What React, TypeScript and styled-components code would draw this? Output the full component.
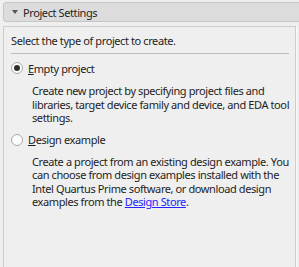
import React from "react";
import styled, { createGlobalStyle } from "styled-components";

const Global = createGlobalStyle`
  html, body {
    margin: 0;
    padding: 0;
    background: #efefef;
    overflow: hidden;
  }
  body {
    font-family: "Noto Sans", "Open Sans", sans-serif;
    font-size: 11px;
    letter-spacing: -0.4px;
    color: #1e1e1e;
  }
`;

const Page = styled.div`
  height: 267px;
  padding: 2px 0 0 3px;
  box-sizing: border-box;
  display: flex;
  flex-direction: column;
  gap: 4px;
  overflow: hidden;
`;

const SectionHeader = styled.div`
  height: 20px;
  box-sizing: border-box;
  margin-right: -10px;
  display: flex;
  align-items: center;
  gap: 5px;
  padding-left: 8px;
  background: #dcdcdc;
  border: 1px solid #c6c6c6;
  border-radius: 3px;
`;

const Caret = styled.span`
  width: 0;
  height: 0;
  border-left: 3px solid transparent;
  border-right: 3px solid transparent;
  border-top: 4px solid #555;
`;

const Panel = styled.div`
  flex: 1;
  width: 293px;
  box-sizing: border-box;
  border: 1px solid #cdcdcd;
  border-bottom: none;
  box-shadow: 1px 0 0 #fafafa;
  background: #efefef;
  padding: 6px 0 0 7px;
`;

const Intro = styled.div`
  line-height: 16px;
  padding-bottom: 4px;
  margin-right: 6px;
  border-bottom: 1px solid #bdbdbd;
`;

const Option = styled.div<{ $first?: boolean }>`
  margin-top: ${(p) => (p.$first ? "6px" : "7px")};
`;

const OptionRow = styled.label`
  display: flex;
  align-items: center;
  gap: 5px;
  height: 16px;
`;

const Radio = styled.span<{ $checked?: boolean }>`
  width: 12px;
  height: 12px;
  box-sizing: border-box;
  border-radius: 50%;
  border: 1px solid #a8a8a8;
  background: #fdfdfd;
  display: flex;
  align-items: center;
  justify-content: center;
  &::after {
    content: "";
    width: 6px;
    height: 6px;
    border-radius: 50%;
    background: ${(p) => (p.$checked ? "#2e2e2e" : "transparent")};
  }
`;

const Mnemonic = styled.span`
  text-decoration: underline;
`;

const Description = styled.p<{ $first?: boolean }>`
  margin: ${(p) => (p.$first ? "8px" : "7px")} 0 0 21px;
  line-height: 13.5px;
`;

const Link = styled.a`
  color: #2323ff;
  text-decoration: underline;
`;

export default function App() {
  return (
    <>
      <Global />
      <Page>
        <SectionHeader>
          <Caret />
          Project Settings
        </SectionHeader>
        <Panel>
          <Intro>Select the type of project to create.</Intro>
          <Option $first>
            <OptionRow>
              <Radio $checked />
              <span>
                <Mnemonic>E</Mnemonic>mpty project
              </span>
            </OptionRow>
            <Description $first>
              Create new project by specifying project files and libraries,
              target device family and device, and EDA tool settings.
            </Description>
          </Option>
          <Option>
            <OptionRow>
              <Radio />
              <span>
                <Mnemonic>D</Mnemonic>esign example
              </span>
            </OptionRow>
            <Description>
              Create a project from an existing design example. You can choose
              from design examples installed with the Intel Quartus Prime
              software, or download design examples from the{" "}
              <Link href="#">Design Store</Link>.
            </Description>
          </Option>
        </Panel>
      </Page>
    </>
  );
}
